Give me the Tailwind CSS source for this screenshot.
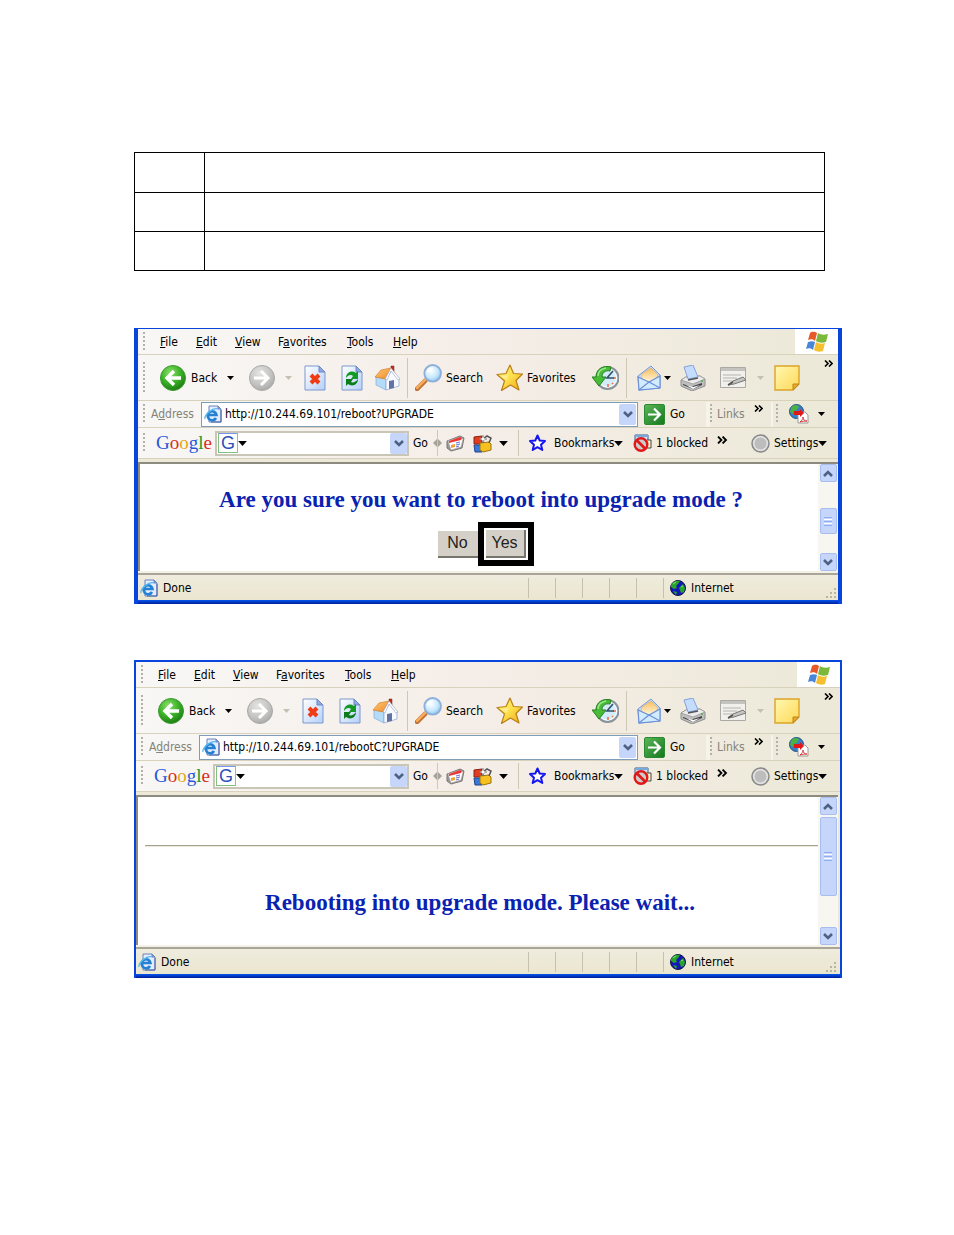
<!DOCTYPE html>
<html lang="en">
<head>
    <meta charset="UTF-8">
    <meta name="viewport" content="width=device-width, initial-scale=1.0">
    <title>Reboot into upgrade mode</title>
    <script src="https://cdn.jsdelivr.net/npm/@tailwindcss/browser@4"></script>
</head>
<body class="bg-white min-h-screen text-xs text-black font-['DejaVu_Sans_Condensed','DejaVu_Sans',sans-serif]">

    <!-- icon sprite -->
    <svg class="absolute size-0" aria-hidden="true">
        <defs>
            <radialGradient id="g-green" cx=".4" cy=".3" r=".75"><stop offset="0" stop-color="#8fe070"/><stop offset=".5" stop-color="#3fb52a"/><stop offset="1" stop-color="#17780f"/></radialGradient>
            <radialGradient id="g-grey" cx=".4" cy=".3" r=".8"><stop offset="0" stop-color="#e4e4e2"/><stop offset=".6" stop-color="#c2c2c0"/><stop offset="1" stop-color="#a2a2a0"/></radialGradient>
            <linearGradient id="g-doc" x1="0" y1="0" x2="1" y2="1"><stop offset="0" stop-color="#ffffff"/><stop offset="1" stop-color="#b4d0fa"/></linearGradient>
            <linearGradient id="g-star" x1="0" y1="0" x2="1" y2="1"><stop offset="0" stop-color="#fff27c"/><stop offset=".5" stop-color="#fde04c"/><stop offset="1" stop-color="#f2a010"/></linearGradient>
            <linearGradient id="g-roof" x1="0" y1="0" x2="1" y2="1"><stop offset="0" stop-color="#ffd080"/><stop offset="1" stop-color="#f08420"/></linearGradient>
            <linearGradient id="g-flap" x1="0" y1="0" x2="0" y2="1"><stop offset="0" stop-color="#f8c060"/><stop offset="1" stop-color="#fff8e0"/></linearGradient>
            <linearGradient id="g-note" x1="0" y1="0" x2="1" y2="1"><stop offset="0" stop-color="#fff8b0"/><stop offset="1" stop-color="#ffd858"/></linearGradient>
            <radialGradient id="g-lens" cx=".4" cy=".35" r=".7"><stop offset="0" stop-color="#ffffff"/><stop offset=".6" stop-color="#c6e8fc"/><stop offset="1" stop-color="#84bff0"/></radialGradient>
            <linearGradient id="g-go" x1="0" y1="0" x2="1" y2="1"><stop offset="0" stop-color="#5cb85a"/><stop offset="1" stop-color="#14761c"/></linearGradient>
        </defs>

        <symbol id="back" viewBox="0 0 26 26">
            <circle cx="13" cy="13" r="12.5" fill="url(#g-green)" stroke="#3c9a30"/>
            <path d="M21 13H8M14 6l-7 7 7 7" fill="none" stroke="#fff" stroke-width="3.4"/>
        </symbol>
        <symbol id="forward" viewBox="0 0 26 26">
            <circle cx="13" cy="13" r="12.5" fill="url(#g-grey)" stroke="#a8a8a6"/>
            <path d="M5 13h13M12 6l7 7-7 7" fill="none" stroke="#fff" stroke-width="3"/>
        </symbol>
        <symbol id="stop" viewBox="0 0 22 26">
            <path d="M1 1h14l6 6v18H1z" fill="url(#g-doc)" stroke="#7d98cc"/>
            <path d="M15 1v6h6z" fill="#8fa9e0" stroke="#6c88c4"/>
            <path d="M7 10l8 8M15 10l-8 8" stroke="#f03c14" stroke-width="4"/>
        </symbol>
        <symbol id="refresh" viewBox="0 0 22 26">
            <path d="M1 1h14l6 6v18H1z" fill="url(#g-doc)" stroke="#7d98cc"/>
            <path d="M15 1v6h6z" fill="#8fa9e0" stroke="#6c88c4"/>
            <path d="M5 13c0-6 6-8 10-5l2-2v8h-7l2-3c-2-2-5-1-7 2z" fill="#149a24"/>
            <path d="M17 14c0 6-6 8-10 5l-2 2v-7h7l-2 3c2 1 5 0 7-3z" fill="#0c7c1c"/>
        </symbol>
        <symbol id="home" viewBox="0 0 26 26">
            <path d="M2 12l10 2v11L2 20z" fill="#b4dcf8" stroke="#88acd8" stroke-width=".7"/>
            <path d="M12 14l6-9 7 9v7l-13 4z" fill="#f6faff" stroke="#8ea2cc" stroke-width=".7"/>
            <path d="M17 1h3v6l-3-2z" fill="#c03020" stroke="#802010" stroke-width=".5"/>
            <path d="M1 12L7 5l10-2-5 11z" fill="url(#g-roof)" stroke="#d88028" stroke-width=".7"/>
            <path d="M17 3l9 11-2 1-7-9-4 9-2-1z" fill="#fff" stroke="#98a0bc" stroke-width=".6"/>
            <path d="M15 16l5-1v8l-5 1z" fill="#6272a4"/>
        </symbol>
        <symbol id="search" viewBox="0 0 26 26">
            <path d="M2 24l8-8" stroke="#c07030" stroke-width="4.4" stroke-linecap="round"/>
            <path d="M2 23l8-8" stroke="#f8ac5c" stroke-width="2.4" stroke-linecap="round"/>
            <circle cx="17" cy="9" r="8" fill="url(#g-lens)" stroke="#8eb0d8" stroke-width="1.8"/>
            <path d="M12 8a5 5 0 0 1 5-4" fill="none" stroke="#fff" stroke-width="1.6"/>
        </symbol>
        <symbol id="star" viewBox="0 0 27 27">
            <path d="M14 1l3.500 8.500 9 .5-6.500 6.500 3 9.500-8.500-5-9 5.500L8.500 17 1 10.500l9-1z" fill="url(#g-star)" stroke="#b98118" stroke-width="1.2" stroke-linejoin="round"/>
            <path d="M14 4l-2 7-8 1 7 4z" fill="#fff" fill-opacity=".35"/>
        </symbol>
        <symbol id="history" viewBox="0 0 27 26">
            <circle cx="15.500" cy="13" r="11" fill="#d4ecfa" stroke="#8c9298" stroke-width="2"/>
            <circle cx="15.500" cy="13" r="9" fill="none" stroke="#fff"/>
            <path d="M16 19v3M21 13h3M20 18l1 1" stroke="#f07040" stroke-width="1.6"/>
            <path d="M21 6l-6 7h7" fill="none" stroke="#30506c" stroke-width="1.6"/>
            <path d="M19 2C11 0 4 4 4 12H0l7 9 7-9h-4c0-4 3-7 8-6z" fill="#48bc38" stroke="#258020"/>
            <path d="M6 11c0-4 3-7 8-8" fill="none" stroke="#a0e890" stroke-width="1.4"/>
        </symbol>
        <symbol id="mail" viewBox="0 0 24 26">
            <path d="M1 11L14 1l9 9v13L2 25z" fill="#c4dcfa" stroke="#7c98d4"/>
            <path d="M5 9l9-6 7 7-2 4-7 4-8-5z" fill="url(#g-flap)" stroke="#d8a860" stroke-width=".6"/>
            <path d="M1 12l11 5 11-6v12L2 25z" fill="#d0ecfe" stroke="#6c90d8" stroke-width="1.2"/>
            <path d="M2 25l10-8 11 6" fill="none" stroke="#6c90d8" stroke-width="1.2"/>
        </symbol>
        <symbol id="printer" viewBox="0 0 26 26">
            <path d="M1 15l5-3 14-1 5 3v7l-13 5L1 21z" fill="#bdbdbd" stroke="#909090"/>
            <path d="M1 15l5-3 14-1 5 3-12 5z" fill="#ececec" stroke="#999" stroke-width=".8"/>
            <path d="M4 2l9-2 5 12-10 2z" fill="#c4dcfe" stroke="#86a2d8"/>
            <path d="M8 15l10-2" stroke="#555" stroke-width="1.6"/>
            <path d="M3 19l9 3 1-1 9-3v2l-9 4-10-4z" fill="#444"/>
            <path d="M6 20l7 2 7-2-7 4z" fill="#fff"/>
            <circle cx="22" cy="16" r="1" fill="#51ab48"/>
        </symbol>
        <symbol id="edit" viewBox="0 0 26 22">
            <path d="M.5.5h25v20H.5z" fill="#f1f0ed" stroke="#aaa9a5"/>
            <path d="M1 1h24v3H1z" fill="#c4c3bf"/>
            <path d="M3 8h18M3 11h14M3 14h10" stroke="#b6b5b0"/>
            <path d="M8 18l5-4 10-4 3 3-12 4z" fill="#c4c4c2" stroke="#777"/>
            <path d="M8 18l5-3" stroke="#555" stroke-width="1.5"/>
        </symbol>
        <symbol id="note" viewBox="0 0 26 26">
            <path d="M1 1h24v18l-6 6H1z" fill="url(#g-note)" stroke="#dca428" stroke-width="1.4"/>
            <path d="M25 19h-6v6z" fill="#e9a72c" stroke="#bd861c"/>
        </symbol>
        <symbol id="down" viewBox="0 0 7 4"><path d="M0 0h7L3.5 4z" fill="currentColor"/></symbol>
        <symbol id="more" viewBox="0 0 9 7"><path d="M1 .5l3 3-3 3M5 .5l3 3-3 3" fill="none" stroke="#000" stroke-width="1.6"/></symbol>
        <symbol id="grip" viewBox="0 0 2 20">
            <path d="M1 0v20" stroke="#b3b0a6" stroke-width="2" stroke-dasharray="2 2"/>
        </symbol>
        <symbol id="ie" viewBox="0 0 18 18">
            <path d="M5 1h9l3 3v13H5z" fill="#e4ecff" stroke="#6781be"/>
            <path d="M14 1v3h3z" fill="#93aade" stroke="#6781be"/>
            <path d="M17 5v12H7" fill="none" stroke="#4964a6"/>
            <path d="M12 13A4.500 4.500 0 1 1 12.500 10H4" fill="none" stroke="#2582d2" stroke-width="2.6"/>
            <path d="M1 14C0 10 9 2 14 4" fill="none" stroke="#55b8f0" stroke-width="1.3"/>
        </symbol>
        <symbol id="chevron" viewBox="0 0 10 7"><path d="M1 1l4 4 4-4" fill="none" stroke="#4d6185" stroke-width="2.6"/></symbol>
        <symbol id="go" viewBox="0 0 21 21">
            <rect x=".5" y=".5" width="20" height="20" rx="1.500" fill="url(#g-go)" stroke="#2b8a30"/>
            <path d="M4 10.500h11M10 4.500l6 6-6 6" fill="none" stroke="#fff" stroke-width="2.2"/>
        </symbol>
        <symbol id="pdf" viewBox="0 0 20 20">
            <circle cx="7.500" cy="7.500" r="7" fill="#3580c8" stroke="#24507c"/>
            <path d="M2 4c3-4 6-3 8-2l-2 4-3 1-1 3-3-2zM8 9l4 1-3 4z" fill="#4cb045"/>
            <path d="M9 8h7l3 3v8H9z" fill="#fff" stroke="#999"/>
            <path d="M5 7h6V5l4 4-4 4v-2H5z" fill="#e01818"/>
            <path d="M11 18c2-2 3-3 3-5 0 3 2 4 4 4-2 0-4 0-7 1z" fill="none" stroke="#d33c38"/>
        </symbol>
        <symbol id="news" viewBox="0 0 19 17">
            <path d="M1 6l13-5 4 2-2 10-11 3-4-3z" fill="#999" stroke="#777"/>
            <path d="M2 6l12-4 3 2-2 8-10 3z" fill="#fff" stroke="#b0a0a0" stroke-width=".6"/>
            <path d="M3 6l11-4 2 1-1 2L3 8z" fill="#e83838"/>
            <path d="M5 10l4-1v3l-4 1z" fill="#f0a030"/>
            <path d="M10 8l4-1M10 10l4-1M10 12l3-1" stroke="#6470d8"/>
        </symbol>
        <symbol id="blocks" viewBox="0 0 19 19">
            <path d="M1 3l8-1v8H1z" fill="#e03c20" stroke="#8a2010"/>
            <path d="M1 11h8v7H2z" fill="#3878d8" stroke="#204488"/>
            <path d="M7 9l9-1 2 2v6l-8 2-3-2z" fill="#f5c020" stroke="#9c7410"/>
            <path d="M10 9V5l4-3 4 2-2 5" fill="none" stroke="#555" stroke-width="1.500"/>
            <path d="M10 1l1 3 3 1-3 1-1 3-1-3-3-1 3-1z" fill="#fff" stroke="#666" stroke-width=".5"/>
        </symbol>
        <symbol id="bluestar" viewBox="0 0 19 18">
            <path d="M9.500 1.500l2.200 5 5.300.5-4 3.700 1.300 5.300-4.800-2.800L4.700 16 6 10.700 2 7l5.300-.5z" fill="#fff" stroke="#1515f0" stroke-width="2" stroke-linejoin="round"/>
        </symbol>
        <symbol id="blocked" viewBox="0 0 19 18">
            <path d="M2 1h13v11H2z" fill="#cfe4f8" stroke="#3a5a86"/>
            <path d="M2 1h13v2H2z" fill="#78a8dc"/>
            <path d="M14 6h4v8h-4" fill="#fff3c8" stroke="#444"/>
            <circle cx="8" cy="10.500" r="6.300" fill="#ccc" stroke="#e01818" stroke-width="2.4"/>
            <path d="M3.500 6l9 9" stroke="#e01818" stroke-width="2.6"/>
        </symbol>
        <symbol id="knob" viewBox="0 0 19 19">
            <circle cx="9.500" cy="9.500" r="8.500" fill="#ddd" stroke="#888" stroke-width="1.500"/>
            <circle cx="9.500" cy="9.500" r="6.500" fill="#bdbdbd" stroke="#e4e4e4"/>
        </symbol>
        <symbol id="globe" viewBox="0 0 16 16">
            <circle cx="8" cy="8" r="7.500" fill="#1418b8" stroke="#101440"/>
            <path d="M1 5c2-4 6-5 9-4L8 4 6 6l1 2-3 1-3-2zM9 8l4-4 2 4-1 4-3 1-1-3zM3 11l4 1-1 3z" fill="#28a428"/>
            <path d="M3 4l3-2M11 7l2-1" stroke="#8be070"/>
        </symbol>
        <symbol id="flag" viewBox="0 0 24 22">
            <path d="M5 2c3-2 5-1 7 0l-2 8c-2-2-4-2-7-1z" fill="#e8582a"/>
            <path d="M13 2c3 2 6 2 10 1l-2 8c-4 1-7 1-10-1z" fill="#7cb83a"/>
            <path d="M3 11c3-1 5-1 7 0l-2 8c-2-2-4-2-7-1z" fill="#4a86d8"/>
            <path d="M11 11c3 2 6 2 9 1l-2 8c-3 1-6 1-9-1z" fill="#f5c030"/>
        </symbol>
        <symbol id="corner" viewBox="0 0 12 12">
            <path d="M9 0h2v2H9zM5 4h2v2H5zM9 4h2v2H9zM1 8h2v2H1zM5 8h2v2H5zM9 8h2v2H9z" fill="#b9b4a0"/>
        </symbol>
    </svg>

    <main class="pt-[152px] pl-[134px] pr-[112px]">
        <div class="pr-[17px]">
            <table class="w-full table-fixed border-collapse">
                <colgroup><col class="w-[70px]"><col></colgroup>
                <tbody>
                    <tr class="h-10"><td class="border border-black"></td><td class="border border-black"></td></tr>
                    <tr class="h-[39px]"><td class="border border-black"></td><td class="border border-black"></td></tr>
                    <tr class="h-[39px]"><td class="border border-black"></td><td class="border border-black"></td></tr>
                </tbody>
            </table>
        </div>
        <div id="windows" class="mt-[57px] flex flex-col gap-14"></div>
    </main>

    <script>
        const windows = [
            {
                frame: 'border-x-4 border-t',
                inset: '',
                address: 'http://10.244.69.101/reboot?UPGRADE',
                body: 'h-[109px]',
                thumb: 'mt-[26px] h-[26px]',
                page: `
                    <h2 class="pt-[22px] pl-1 text-center text-[23px] leading-7 font-bold text-[#0a22b0] font-['Liberation_Serif',serif]">Are you sure you want to reboot into upgrade mode ?</h2>
                    <div class="mt-2 flex items-center justify-center pl-[13px] text-base leading-5 text-[#222] font-['Liberation_Sans',sans-serif]">
                        <button class="h-[27px] w-10 bg-[#d4d0c8] border-b-2 border-[#77746e]">No</button>
                        <span class="border-6 border-black p-[2px] bg-white">
                            <button class="block h-[28px] w-10 bg-[#d4d0c8] border-r-2 border-b-2 border-[#77746e]">Yes</button>
                        </span>
                    </div>`,
            },
            {
                frame: 'border-x-2 border-t-2',
                inset: 'pr-[2px]',
                address: 'http://10.244.69.101/rebootC?UPGRADE',
                body: 'h-[150px]',
                thumb: 'mt-[2px] h-[79px]',
                page: `
                    <hr class="mt-12 ml-[7px] border-t border-b border-t-[#a5a295] border-b-[#ece9d8]">
                    <h2 class="pt-[42px] pl-1 text-center text-[23px] leading-7 font-bold text-[#0a22b0] font-['Liberation_Serif',serif]">Rebooting into upgrade mode. Please wait...</h2>`,
            },
        ];

        const grip = '<span class="flex w-[22px] shrink-0 pl-[5px]"><svg class="h-5 w-[2px]"><use href="#grip"/></svg></span>';
        const scrollButton = 'flex h-[18px] w-[17px] items-center justify-center rounded-xs border border-[#a8bdf0] bg-[#c6d6fb]';

        function browserWindow(w) {
            return `
            <section class="border-[#0845dc] ${w.frame}">
                <div class="bg-linear-to-r from-[#f8f7f5] via-[#f5ede7] to-[#ece9d8] whitespace-nowrap">
                    <nav class="flex h-[26px] items-stretch border-b border-[#d8d2bd]">
                        <span class="flex items-center">${grip}</span>
                        <button class="w-9 text-left"><u>F</u>ile</button>
                        <button class="w-[39px] text-left"><u>E</u>dit</button>
                        <button class="w-[43px] text-left"><u>V</u>iew</button>
                        <button class="w-[69px] text-left">F<u>a</u>vorites</button>
                        <button class="w-[46px] text-left"><u>T</u>ools</button>
                        <button class="text-left"><u>H</u>elp</button>
                        <span class="ml-auto flex w-[43px] items-center justify-center bg-white"><svg class="h-[22px] w-6"><use href="#flag"/></svg></span>
                    </nav>
                    <div class="flex h-[46px] items-center border-b border-[#d8d2bd] ${w.inset}">
                        <span class="flex w-[22px] shrink-0 pl-[5px]"><svg class="h-8 w-[2px]" viewBox="0 0 2 32"><path d="M1 0v32" stroke="#b3b0a6" stroke-width="2" stroke-dasharray="2 2"/></svg></span>
                        <button class="flex w-16 items-center gap-[5px]"><svg class="size-[26px] shrink-0"><use href="#back"/></svg>Back</button>
                        <button class="w-[25px] pl-[3px]" aria-label="Back history"><svg class="h-1 w-[7px]"><use href="#down"/></svg></button>
                        <button class="w-9" aria-label="Forward"><svg class="size-[26px]"><use href="#forward"/></svg></button>
                        <button class="w-[19px] text-[#c4c0b4]" aria-label="Forward history"><svg class="h-1 w-[7px]"><use href="#down"/></svg></button>
                        <button class="w-[37px]" aria-label="Stop"><svg class="h-[26px] w-[22px]"><use href="#stop"/></svg></button>
                        <button class="w-8" aria-label="Refresh"><svg class="h-[26px] w-[22px]"><use href="#refresh"/></svg></button>
                        <button class="grow" aria-label="Home"><svg class="ml-px size-[26px]"><use href="#home"/></svg></button>
                        <span class="mr-[7px] h-10 w-px bg-[#cdc8b4]"></span>
                        <button class="flex w-[81px] items-center gap-1"><svg class="size-[27px] shrink-0"><use href="#search"/></svg>Search</button>
                        <button class="flex w-24 items-center gap-1"><svg class="size-[27px] shrink-0"><use href="#star"/></svg>Favorites</button>
                        <button class="w-[34px]" aria-label="History"><svg class="h-[26px] w-[27px]"><use href="#history"/></svg></button>
                        <span class="mr-[10px] h-10 w-px bg-[#cdc8b4]"></span>
                        <button class="w-[27px]" aria-label="Mail"><svg class="h-[26px] w-6"><use href="#mail"/></svg></button>
                        <button class="w-4" aria-label="Mail options"><svg class="h-1 w-[7px]"><use href="#down"/></svg></button>
                        <button class="w-10" aria-label="Print"><svg class="size-[26px]"><use href="#printer"/></svg></button>
                        <button class="w-[37px]" aria-label="Edit"><svg class="h-[22px] w-[26px]"><use href="#edit"/></svg></button>
                        <button class="w-[17px] text-[#c4c0b4]" aria-label="Edit options"><svg class="h-1 w-[7px]"><use href="#down"/></svg></button>
                        <button class="w-[50px]" aria-label="Notes"><svg class="size-[26px]"><use href="#note"/></svg></button>
                        <button class="w-[14px] self-start pt-[5px]" aria-label="More buttons"><svg class="h-[7px] w-[9px]"><use href="#more"/></svg></button>
                    </div>
                    <div class="flex h-[27px] items-center border-b border-[#d8d2bd] ${w.inset}">
                        <span class="-mr-[9px]">${grip}</span>
                        <label class="flex grow items-center text-[#858378]">
                            <span class="w-[50px]">A<u>d</u>dress</span>
                            <span class="flex h-[25px] grow items-center border border-[#7f9db9] bg-white pl-[2px] pr-px text-black">
                                <svg class="size-[18px] shrink-0"><use href="#ie"/></svg>
                                <input class="ml-[3px] w-0 grow outline-none" value="${w.address}">
                                <button class="flex h-[21px] w-[17px] items-center justify-center rounded-xs bg-[#c6d6fb]" aria-label="Show addresses"><svg class="h-[7px] w-[10px]"><use href="#chevron"/></svg></button>
                            </span>
                        </label>
                        <button class="ml-[6px] flex w-[62px] items-center gap-[5px]"><svg class="size-[21px] shrink-0"><use href="#go"/></svg>Go</button>
                        <span class="h-[25px] w-1 bg-[#f6f3e8]"></span>
                        <svg class="h-5 w-[2px]"><use href="#grip"/></svg>
                        <span class="ml-[5px] w-[37px] text-[#858378]">Links</span>
                        <button class="w-[17px] self-start pt-1" aria-label="More links"><svg class="h-[7px] w-[9px]"><use href="#more"/></svg></button>
                        <span class="mr-[3px] h-[25px] w-[2px] bg-[#f6f3e8]"></span>
                        <svg class="mr-[11px] h-5 w-[2px]"><use href="#grip"/></svg>
                        <button class="w-[29px]" aria-label="Convert to PDF"><svg class="size-5"><use href="#pdf"/></svg></button>
                        <button class="w-5" aria-label="PDF options"><svg class="h-1 w-[7px]"><use href="#down"/></svg></button>
                    </div>
                    <div class="flex h-[31px] items-center border-b border-[#d8d2bd] ${w.inset}">
                        <span class="-mr-1">${grip}</span>
                        <span class="w-[59px] text-[19px] leading-6 font-['Liberation_Serif',serif]"><span class="text-[#2858d8]">G</span><span class="text-[#d83020]">o</span><span class="text-[#e0a818]">o</span><span class="text-[#2858d8]">g</span><span class="text-[#189a30]">l</span><span class="text-[#d83020]">e</span></span>
                        <span class="flex h-[25px] grow items-center border-2 border-[#c9c6b8] bg-white pl-px">
                            <span class="flex size-5 items-center justify-center border border-t-[#7898f0] border-r-[#f09090] border-b-[#80c080] border-l-[#80c080] text-lg leading-4 text-[#2c50b8] font-['Liberation_Sans',sans-serif]">G</span>
                            <svg class="h-[5px] w-[9px]"><use href="#down"/></svg>
                            <input class="w-0 grow outline-none" aria-label="Google search">
                            <button class="flex h-[21px] w-[17px] items-center justify-center rounded-xs bg-[#c6d6fb]" aria-label="Search history"><svg class="h-[7px] w-[10px]"><use href="#chevron"/></svg></button>
                        </span>
                        <button class="ml-1 w-5 text-left">Go</button>
                        <svg class="h-[26px] w-[9px]" viewBox="0 0 9 26"><path d="M4.500 0v26" stroke="#cdc8b4"/><path d="M0 13l4-4v8zM9 13l-4-4v8z" fill="#a5a298"/></svg>
                        <button class="ml-1 w-[27px]" aria-label="News"><svg class="h-[17px] w-[19px]"><use href="#news"/></svg></button>
                        <button class="w-[26px]" aria-label="Tools"><svg class="size-[19px]"><use href="#blocks"/></svg></button>
                        <button class="w-[19px]" aria-label="Tool options"><svg class="h-[5px] w-[9px]"><use href="#down"/></svg></button>
                        <span class="mr-[9px] h-[26px] w-px bg-[#cdc8b4]"></span>
                        <button class="flex w-[105px] items-center"><svg class="mr-[7px] h-[18px] w-[19px] shrink-0"><use href="#bluestar"/></svg>Bookmarks<svg class="h-[5px] w-[9px] shrink-0"><use href="#down"/></svg></button>
                        <button class="flex w-[83px] items-center gap-1"><svg class="h-[18px] w-[19px] shrink-0"><use href="#blocked"/></svg>1 blocked</button>
                        <button class="w-[35px] self-start pt-2" aria-label="More tools"><svg class="h-2 w-3"><use href="#more"/></svg></button>
                        <button class="flex w-[87px] items-center"><svg class="mr-1 size-[19px] shrink-0"><use href="#knob"/></svg>Settings<svg class="h-[5px] w-[9px] shrink-0"><use href="#down"/></svg></button>
                    </div>
                </div>
                <div class="bg-[#ece9d8] pt-[3px] ${w.inset}">
                    <div class="flex border-t-2 border-l-2 border-[#8d8b80] bg-white ${w.body}">
                        <div class="grow">${w.page}</div>
                        <div class="flex w-5 flex-col items-center bg-[#f7f6f0]">
                            <span class="${scrollButton}"><svg class="h-[7px] w-[10px] rotate-180"><use href="#chevron"/></svg></span>
                            <span class="flex w-[17px] flex-col items-center justify-center gap-px rounded-xs border border-[#a8bdf0] bg-[#c6d6fb] ${w.thumb}">
                                <span class="h-px w-2 bg-[#8fb0f0]"></span><span class="h-px w-2 bg-white"></span><span class="h-px w-2 bg-[#8fb0f0]"></span><span class="h-px w-2 bg-white"></span><span class="h-px w-2 bg-[#8fb0f0]"></span>
                            </span>
                            <span class="mt-auto ${scrollButton}"><svg class="h-[7px] w-[10px]"><use href="#chevron"/></svg></span>
                        </div>
                    </div>
                </div>
                <footer class="border-t-2 border-[#f3f1e6]">
                    <div class="flex h-[27px] items-center border-t-2 border-[#a9a698] bg-linear-to-b from-[#efecde] to-[#ebe6d0] pl-[2px] ${w.inset}">
                        <svg class="mr-[5px] size-[18px]"><use href="#ie"/></svg>
                        <span class="grow">Done</span>
                        <span class="h-5 w-[27px] border-l border-[#c5c1ae]"></span>
                        <span class="h-5 w-[27px] border-l border-[#c5c1ae]"></span>
                        <span class="h-5 w-[27px] border-l border-[#c5c1ae]"></span>
                        <span class="h-5 w-[27px] border-l border-[#c5c1ae]"></span>
                        <span class="h-5 w-[27px] border-l border-[#c5c1ae]"></span>
                        <span class="flex h-5 w-[162px] items-center border-l border-[#c5c1ae] pl-[6px]"><svg class="mr-[5px] size-4"><use href="#globe"/></svg>Internet</span>
                        <svg class="mr-px size-3 self-end"><use href="#corner"/></svg>
                    </div>
                    <div class="h-1 bg-linear-to-b from-[#0858f0] to-[#001c9c]"></div>
                </footer>
            </section>`;
        }

        document.getElementById('windows').innerHTML = windows.map(browserWindow).join('');
    </script>
</body>
</html>
